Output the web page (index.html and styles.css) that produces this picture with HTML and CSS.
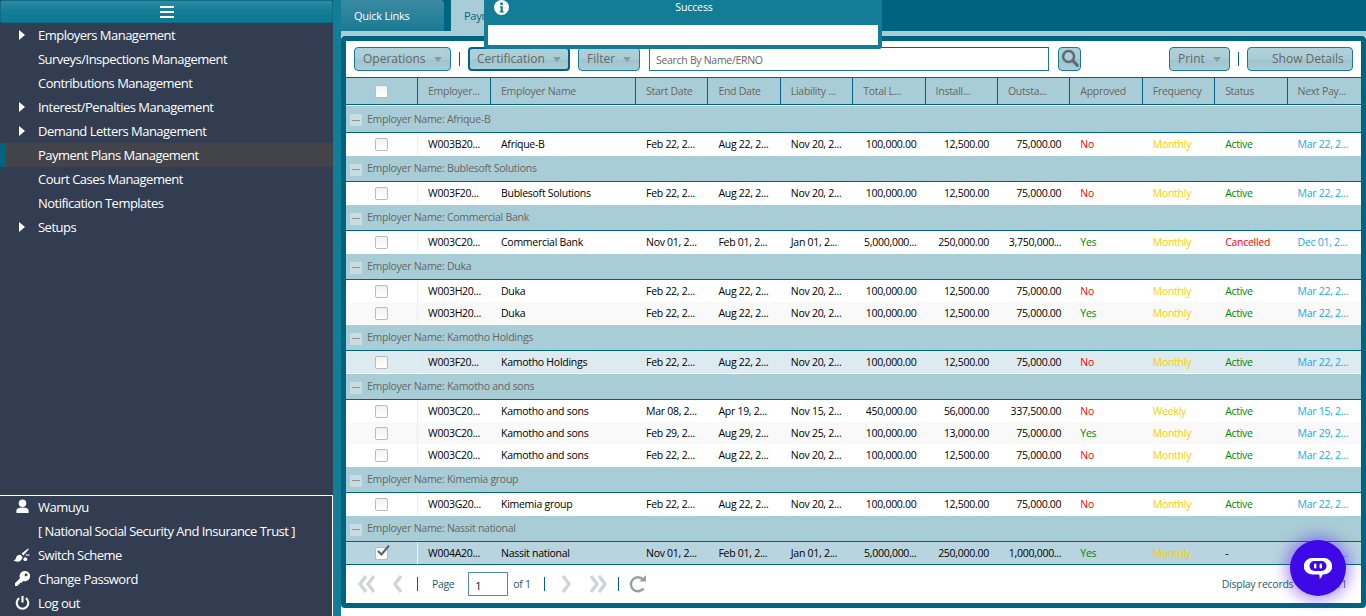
FILE: index.html
```html
<!DOCTYPE html>
<html lang="en">
<head>
    <meta charset="UTF-8">
    <meta name="viewport" content="width=device-width, initial-scale=1.0">
    <title>Payment Plans Management</title>
    <link rel="stylesheet" href="styles.css">
</head>
<body>
    <div class="page">
        <aside class="sidebar">
            <div class="menu-toggle">
                <svg width="16" height="14" viewBox="0 0 16 14"><path d="M1 2h14M1 7h14M1 12h14" stroke="#fff" stroke-width="2.2"/></svg>
            </div>
            <ul class="menu">
                <li class="menu-item has-sub">Employers Management</li>
                <li class="menu-item">Surveys/Inspections Management</li>
                <li class="menu-item">Contributions Management</li>
                <li class="menu-item has-sub">Interest/Penalties Management</li>
                <li class="menu-item has-sub">Demand Letters Management</li>
                <li class="menu-item active">Payment Plans Management</li>
                <li class="menu-item">Court Cases Management</li>
                <li class="menu-item">Notification Templates</li>
                <li class="menu-item has-sub">Setups</li>
            </ul>
            <ul class="menu user-menu">
                <li class="menu-item">
                    <svg class="menu-icon" viewBox="0 0 16 16"><circle cx="8" cy="4.5" r="4"/><path d="M1.5 15v-2.5c0-2.5 2.5-3.5 6.5-3.5s6.500 1 6.500 3.500V15z"/></svg>
                    Wamuyu
                </li>
                <li class="menu-item">[ National Social Security And Insurance Trust ]</li>
                <li class="menu-item">
                    <svg class="menu-icon broom" viewBox="0 0 18 16"><path d="M0 14.500c2-.5 2.500-2 3-4 1-1.500 3-2.500 4.500-2l2 2c.2 2-1.500 4.500-3.500 5-2 .3-4.500.2-6-1z"/><path d="M8.500 7l7-5.500.8 1L10.500 9z"/><circle cx="12.500" cy="13" r="2"/><path d="M13 8h4v1.200h-4z"/></svg>
                    Switch Scheme
                </li>
                <li class="menu-item">
                    <svg class="menu-icon" viewBox="0 0 16 16"><path d="M10.500 0a5.500 5.500 0 1 1-1.700 10.700L7 12.500H5v2H3V16H0v-3l5.300-5.300A5.500 5.500 0 0 1 10.500 0z"/><circle cx="11.800" cy="4.200" r="1.500" fill="#323d51"/></svg>
                    Change Password
                </li>
                <li class="menu-item">
                    <svg class="menu-icon" viewBox="0 0 16 16"><path d="M8 1v7" stroke="#fff" stroke-width="2.200" fill="none"/><path d="M4.500 3.300a6.200 6.200 0 1 0 7 0" stroke="#fff" stroke-width="2.200" fill="none"/></svg>
                    Log out
                </li>
            </ul>
        </aside>

        <main class="content">
            <nav class="tabs">
                <div class="tab">Quick Links</div>
                <div class="tab tab-active">Payment Plans</div>
            </nav>
            <div class="tab-line"></div>
            <section class="panel">
                <div class="toolbar">
                    <button class="btn btn-operations">Operations<span class="caret"></span></button>
                    <span class="sep"></span>
                    <button class="btn btn-cert">Certification<span class="caret"></span></button>
                    <button class="btn btn-filter">Filter<span class="caret"></span></button>
                    <input class="search" type="text" placeholder="Search By Name/ERNO">
                    <button class="btn btn-search">
                        <svg width="18" height="18" viewBox="0 0 19 19"><circle cx="8" cy="8" r="5.800" fill="none" stroke="#5f6b6e" stroke-width="2.600"/><path d="M12.300 12.300l5 5" stroke="#5f6b6e" stroke-width="3.200" stroke-linecap="round"/></svg>
                    </button>
                    <span class="toolbar-gap"></span>
                    <button class="btn btn-print">Print<span class="caret"></span></button>
                    <span class="sep"></span>
                    <button class="btn btn-details">Show Details</button>
                </div>

                <div class="grid-wrap">
                    <table class="grid">
                        <colgroup>
                            <col class="c-check"><col class="c-erno"><col class="c-name"><col class="c-date"><col class="c-date"><col class="c-date"><col class="c-date"><col class="c-date"><col class="c-date"><col class="c-date"><col class="c-date"><col class="c-date"><col class="c-last">
                        </colgroup>
                        <thead>
                            <tr>
                                <th class="center"><span class="check"></span></th>
                                <th>Employer...</th><th>Employer Name</th><th>Start Date</th><th>End Date</th><th>Liability ...</th><th>Total L...</th><th>Install...</th><th>Outsta...</th><th>Approved</th><th>Frequency</th><th>Status</th><th>Next Pay...</th>
                            </tr>
                        </thead>
                        <tbody>
                            <tr class="group"><td colspan="13"><span class="collapse"></span>Employer Name: Afrique-B</td></tr>
                            <tr><td class="center"><span class="check"></span></td><td>W003B20...</td><td>Afrique-B</td><td>Feb 22, 2...</td><td>Aug 22, 2...</td><td>Nov 20, 2...</td><td class="num">100,000.00</td><td class="num">12,500.00</td><td class="num">75,000.00</td><td class="red">No</td><td class="yellow">Monthly</td><td class="green">Active</td><td class="blue">Mar 22, 2...</td></tr>

                            <tr class="group"><td colspan="13"><span class="collapse"></span>Employer Name: Bublesoft Solutions</td></tr>
                            <tr><td class="center"><span class="check"></span></td><td>W003F20...</td><td>Bublesoft Solutions</td><td>Feb 22, 2...</td><td>Aug 22, 2...</td><td>Nov 20, 2...</td><td class="num">100,000.00</td><td class="num">12,500.00</td><td class="num">75,000.00</td><td class="red">No</td><td class="yellow">Monthly</td><td class="green">Active</td><td class="blue">Mar 22, 2...</td></tr>

                            <tr class="group"><td colspan="13"><span class="collapse"></span>Employer Name: Commercial Bank</td></tr>
                            <tr><td class="center"><span class="check"></span></td><td>W003C20...</td><td>Commercial Bank</td><td>Nov 01, 2...</td><td>Feb 01, 2...</td><td>Jan 01, 2...</td><td class="num">5,000,000...</td><td class="num">250,000.00</td><td class="num">3,750,000...</td><td class="green">Yes</td><td class="yellow">Monthly</td><td class="red">Cancelled</td><td class="blue">Dec 01, 2...</td></tr>

                            <tr class="group"><td colspan="13"><span class="collapse"></span>Employer Name: Duka</td></tr>
                            <tr><td class="center"><span class="check"></span></td><td>W003H20...</td><td>Duka</td><td>Feb 22, 2...</td><td>Aug 22, 2...</td><td>Nov 20, 2...</td><td class="num">100,000.00</td><td class="num">12,500.00</td><td class="num">75,000.00</td><td class="red">No</td><td class="yellow">Monthly</td><td class="green">Active</td><td class="blue">Mar 22, 2...</td></tr>
                            <tr class="alt"><td class="center"><span class="check"></span></td><td>W003H20...</td><td>Duka</td><td>Feb 22, 2...</td><td>Aug 22, 2...</td><td>Nov 20, 2...</td><td class="num">100,000.00</td><td class="num">12,500.00</td><td class="num">75,000.00</td><td class="green">Yes</td><td class="yellow">Monthly</td><td class="green">Active</td><td class="blue">Mar 22, 2...</td></tr>

                            <tr class="group"><td colspan="13"><span class="collapse"></span>Employer Name: Kamotho Holdings</td></tr>
                            <tr class="hover"><td class="center"><span class="check"></span></td><td>W003F20...</td><td>Kamotho Holdings</td><td>Feb 22, 2...</td><td>Aug 22, 2...</td><td>Nov 20, 2...</td><td class="num">100,000.00</td><td class="num">12,500.00</td><td class="num">75,000.00</td><td class="red">No</td><td class="yellow">Monthly</td><td class="green">Active</td><td class="blue">Mar 22, 2...</td></tr>

                            <tr class="group"><td colspan="13"><span class="collapse"></span>Employer Name: Kamotho and sons</td></tr>
                            <tr><td class="center"><span class="check"></span></td><td>W003C20...</td><td>Kamotho and sons</td><td>Mar 08, 2...</td><td>Apr 19, 2...</td><td>Nov 15, 2...</td><td class="num">450,000.00</td><td class="num">56,000.00</td><td class="num">337,500.00</td><td class="red">No</td><td class="yellow">Weekly</td><td class="green">Active</td><td class="blue">Mar 15, 2...</td></tr>
                            <tr class="alt"><td class="center"><span class="check"></span></td><td>W003C20...</td><td>Kamotho and sons</td><td>Feb 29, 2...</td><td>Aug 29, 2...</td><td>Nov 25, 2...</td><td class="num">100,000.00</td><td class="num">13,000.00</td><td class="num">75,000.00</td><td class="green">Yes</td><td class="yellow">Monthly</td><td class="green">Active</td><td class="blue">Mar 29, 2...</td></tr>
                            <tr><td class="center"><span class="check"></span></td><td>W003C20...</td><td>Kamotho and sons</td><td>Feb 22, 2...</td><td>Aug 22, 2...</td><td>Nov 20, 2...</td><td class="num">100,000.00</td><td class="num">12,500.00</td><td class="num">75,000.00</td><td class="red">No</td><td class="yellow">Monthly</td><td class="green">Active</td><td class="blue">Mar 22, 2...</td></tr>

                            <tr class="group"><td colspan="13"><span class="collapse"></span>Employer Name: Kimemia group</td></tr>
                            <tr><td class="center"><span class="check"></span></td><td>W003G20...</td><td>Kimemia group</td><td>Feb 22, 2...</td><td>Aug 22, 2...</td><td>Nov 20, 2...</td><td class="num">100,000.00</td><td class="num">12,500.00</td><td class="num">75,000.00</td><td class="red">No</td><td class="yellow">Monthly</td><td class="green">Active</td><td class="blue">Mar 22, 2...</td></tr>

                            <tr class="group"><td colspan="13"><span class="collapse"></span>Employer Name: Nassit national</td></tr>
                            <tr class="selected"><td class="center"><span class="check checked"><svg width="16" height="14" viewBox="0 0 16 14"><path d="M3 7l3.500 3.500L14 1.500" fill="none" stroke="#5c6468" stroke-width="2"/></svg></span></td><td>W004A20...</td><td>Nassit national</td><td>Nov 01, 2...</td><td>Feb 01, 2...</td><td>Jan 01, 2...</td><td class="num">5,000,000...</td><td class="num">250,000.00</td><td class="num">1,000,000...</td><td class="green">Yes</td><td class="yellow">Monthly</td><td>-</td><td class="blue">Mar 22, 2...</td></tr>
                        </tbody>
                    </table>
                </div>

                <div class="pager">
                    <svg width="19" height="18" viewBox="0 0 19 18"><path d="M8 1L2 9l6 8M16 1l-6 8 6 8" fill="none" stroke="#d2d4d5" stroke-width="3.400"/></svg>
                    <svg class="prev" width="11" height="18" viewBox="0 0 11 18"><path d="M9 1L3 9l6 8" fill="none" stroke="#d2d4d5" stroke-width="3.400"/></svg>
                    <span class="sep"></span>
                    <span class="pager-page">Page</span>
                    <input class="page-input" type="text" value="1">
                    <span class="pager-of">of 1</span>
                    <span class="sep"></span>
                    <svg class="next" width="11" height="18" viewBox="0 0 11 18"><path d="M2 1l6 8-6 8" fill="none" stroke="#d2d4d5" stroke-width="3.400"/></svg>
                    <svg class="last" width="19" height="18" viewBox="0 0 19 18"><path d="M3 1l6 8-6 8M11 1l6 8-6 8" fill="none" stroke="#d2d4d5" stroke-width="3.400"/></svg>
                    <span class="sep"></span>
                    <svg class="refresh" width="18" height="18" viewBox="0 0 18 18"><path d="M14.500 13.500a7 7 0 1 1-.5-9" fill="none" stroke="#9a9d9e" stroke-width="2.400"/><path d="M10.500 6.500H17V0z" fill="#9a9d9e"/></svg>
                    <span class="pager-info">Display records 1 - 11 of 11</span>
                </div>
            </section>
        </main>
    </div>

    <div class="notice">
        <div class="notice-head">
            <svg class="notice-icon" width="15" height="15" viewBox="0 0 15 15"><circle cx="7.500" cy="7.500" r="7.500" fill="#fff"/><circle cx="7.500" cy="3.800" r="1.500" fill="#137c96"/><path d="M5.800 6.200h3v5h1v1.300h-4.200v-1.300h1v-3.700h-.8z" fill="#137c96"/></svg>
            <span>Success</span>
        </div>
        <div class="notice-body"></div>
    </div>

    <div class="chat-button">
        <svg width="28" height="21" viewBox="0 0 28 21"><path d="M8 0h12a8 8 0 0 1 0 16.500h-1.500c-.5 2-1.500 3.500-3 4.500.3-1.500.2-3-.3-4.500H8A8 8 0 0 1 8 0z" fill="#fff"/><rect x="5.500" y="3" width="17" height="10" rx="5" fill="#3f08e6"/><rect x="10" y="5.500" width="2.400" height="5" rx="1.200" fill="#fff"/><rect x="15.600" y="5.500" width="2.400" height="5" rx="1.200" fill="#fff"/></svg>
    </div>
</body>
</html>
```

FILE: styles.css
```css
* {
    box-sizing: border-box;
}

html, body {
    height: 100%;
}

body {
    margin: 0;
    font-family: "Open Sans", "Noto Sans", sans-serif;
    font-size: 12px;
    overflow: hidden;
    background-color: #fff;
}

.page {
    display: flex;
    height: 616px;
}

/* left menu */
.sidebar {
    width: 333px;
    flex-shrink: 0;
    display: flex;
    flex-direction: column;
    background-color: #323d51;
    color: #fff;
}

.menu-toggle {
    height: 23px;
    display: flex;
    justify-content: center;
    align-items: center;
    background: linear-gradient(#2f8aa3, #137c96 50%, #0f7a94);
    border: 1px solid #0d6d86;
    border-radius: 2px;
}

.menu {
    list-style: none;
    margin: 0;
    padding: 0;
}

.menu-item {
    position: relative;
    height: 24px;
    line-height: 24px;
    padding-left: 38px;
    font-size: 13px;
    letter-spacing: -0.52px;
    white-space: nowrap;
}

.menu-item.has-sub::before {
    content: "";
    position: absolute;
    left: 19px;
    top: 7px;
    border-left: 6px solid #fff;
    border-top: 5px solid transparent;
    border-bottom: 5px solid transparent;
}

.menu-item.active {
    background-color: #434449;
    border-left: 6px solid #00637f;
    padding-left: 32px;
}

.user-menu {
    margin-top: auto;
    border-top: 1px solid #fff;
    border-right: 1px solid #fff;
    padding-bottom: 1px;
}

.user-menu .menu-item:first-child {
    height: 23px;
    line-height: 22px;
}

.user-menu .menu-item:first-child .menu-icon {
    top: 3px;
}

.menu-icon {
    position: absolute;
    left: 15px;
    top: 4px;
    width: 15px;
    height: 15px;
    fill: #fff;
}

.menu-icon.broom {
    left: 13px;
    width: 18px;
}

/* right side */
.content {
    flex: 1;
    min-width: 0;
    display: flex;
    flex-direction: column;
    padding-bottom: 8px;
    border-left: 8px solid #137c96;
}

.tabs {
    display: flex;
    height: 31px;
    gap: 7px;
    flex-shrink: 0;
    background-color: #00637f;
}

.tab {
    width: 103px;
    line-height: 32px;
    padding-left: 13px;
    font-size: 11px;
    letter-spacing: -0.25px;
    color: #fff;
    background: linear-gradient(#3a8ba2, #1b7a93);
    border-top-right-radius: 4px;
}

.tab-active {
    width: 200px;
    color: #00637f;
    background: #a9cdd6;
}

.tab-line {
    height: 5px;
    flex-shrink: 0;
    background-color: #a9cdd6;
}

.panel {
    flex: 1;
    min-height: 0;
    display: flex;
    flex-direction: column;
    background-color: #fff;
    border: 5px solid #00637f;
    border-radius: 4px;
}

.toolbar {
    display: flex;
    align-items: center;
    height: 36px;
    padding: 0 8px;
    flex-shrink: 0;
}

.btn {
    height: 24px;
    padding: 0 0 1px 8px;
    font-family: inherit;
    font-size: 12px;
    color: #666;
    text-align: left;
    background: linear-gradient(#b0d1d9, #a9cdd6 50%, #9fc4cd 55%, #a9cdd6);
    border: 1px solid #1b7a93;
    border-radius: 4px;
}

.caret {
    display: inline-block;
    margin-left: 8px;
    vertical-align: middle;
    border-top: 5px solid #8b9a9e;
    border-left: 4px solid transparent;
    border-right: 4px solid transparent;
}

.sep {
    width: 1px;
    height: 14px;
    background-color: #00637f;
    flex-shrink: 0;
}

.btn-operations {
    width: 97px;
    margin-right: 8px;
}

.btn-cert {
    width: 102px;
    margin-left: 8px;
    padding-left: 7px;
    border-color: #00637f;
    border-width: 2px;
}

.btn-filter {
    width: 62px;
    margin-left: 8px;
}

.search {
    width: 400px;
    height: 24px;
    margin-left: 9px;
    padding: 1px 6px 0;
    font-family: inherit;
    font-size: 10.5px;
    letter-spacing: -0.3px;
    border: 1px solid #1b7a93;
    border-top-color: #00637f;
    outline: none;
}

.search::placeholder {
    color: #666;
}

.btn-search {
    width: 23px;
    margin-left: 9px;
    padding: 1px 0 0 2px;
}

.toolbar-gap {
    flex: 1;
}

.btn-print {
    width: 61px;
    margin-right: 8px;
}

.btn-details {
    width: 106px;
    margin-left: 8px;
    padding-left: 24px;
}

/* grid */
.grid-wrap {
    flex: 1;
    min-height: 0;
    overflow: hidden;
}

.grid {
    width: 1015px;
    table-layout: fixed;
    border-collapse: separate;
    border-spacing: 0;
    font-size: 10.5px;
    letter-spacing: -0.27px;
}

.c-check { width: 72px; }
.c-erno { width: 73px; }
.c-name { width: 145px; }
.c-date { width: 72.4px; }
.c-last { width: 73.4px; }

.grid th {
    height: 28px;
    padding: 0 0 0 10px;
    text-align: left;
    font-weight: normal;
    color: #666;
    background-color: #a9cdd6;
    border-top: 1px solid #00637f;
    border-right: 1px solid #00637f;
    border-bottom: 1px solid #00637f;
    white-space: nowrap;
    overflow: hidden;
}

.grid th:last-child {
    border-right: none;
}

.grid td {
    height: 22px;
    padding: 0 0 0 10px;
    color: #000;
    white-space: nowrap;
    overflow: hidden;
}

.grid td:first-child {
    border-right: 1px solid #eee;
}

.grid .center {
    padding: 0;
    text-align: center;
}

.grid .num {
    padding: 0 9px 0 0;
    text-align: right;
}

.grid tr.group td {
    height: 27px;
    padding: 0 0 0 4px;
    color: #666;
    background-color: #a9cdd6;
    border-right: none;
    border-top: 1px solid #fff;
    border-bottom: 1px solid #00637f;
}

.grid tbody tr:first-child td {
    height: 28px;
}

.grid tr.alt td {
    background-color: #f9f9f9;
}

.grid tr.hover td {
    background-color: #ddeaef;
}

.grid tr.selected td {
    height: 23px;
    background-color: #b8d4de;
    border-bottom: 1px solid #00637f;
}

.grid td.red { color: #f00; }
.grid td.green { color: #080; }
.grid td.yellow { color: #fc0; }
.grid td.blue { color: #14aaf5; }

.check {
    display: inline-block;
    width: 13px;
    height: 13px;
    vertical-align: middle;
    background: linear-gradient(#f2f2f2, #fff);
    border: 1px solid #bbb;
    border-radius: 2px;
}

.check.checked {
    position: relative;
}

.check.checked svg {
    position: absolute;
    left: -1px;
    top: -4px;
}

.collapse {
    display: inline-block;
    width: 12px;
    height: 12px;
    margin-right: 5px;
    vertical-align: middle;
    background: linear-gradient(#8f9293, #8f9293) center / 8px 1px no-repeat #c8dce2;
}

/* pager */
.pager {
    display: flex;
    align-items: center;
    height: 38px;
    padding: 0 14px 0 12px;
    flex-shrink: 0;
    font-size: 10.5px;
    letter-spacing: -0.35px;
    color: #1e5a6e;
}

.prev {
    margin: 0 14px 0 15px;
}

.pager-page {
    margin: 0 14px;
}

.page-input {
    width: 40px;
    height: 24px;
    padding: 2px 6px 0;
    font-family: inherit;
    font-size: 11px;
    color: #111;
    border: 1px solid #4f8ea1;
    outline: none;
}

.pager-of {
    margin: 0 13px 0 5px;
}

.next {
    margin-left: 16px;
}

.last {
    margin: 0 11px 0 16px;
}

.refresh {
    margin-left: 10px;
}

.pager-info {
    margin-left: auto;
    letter-spacing: -0.25px;
}

/* overlays */
.notice {
    position: absolute;
    left: 484px;
    top: 0;
    width: 398px;
    height: 49px;
    padding: 0 4px;
    background-color: #137c96;
    border-radius: 0 0 3px 3px;
    color: #fff;
}

.notice-head {
    position: relative;
    height: 25px;
    padding-left: 22px;
    line-height: 14px;
    text-align: center;
    font-size: 10.5px;
    letter-spacing: -0.1px;
}

.notice-icon {
    position: absolute;
    left: 6px;
    top: 0;
}

.notice-body {
    height: 20px;
    background-color: #fff;
}

.chat-button {
    position: absolute;
    left: 1290px;
    top: 540px;
    width: 56px;
    height: 56px;
    display: flex;
    justify-content: center;
    align-items: center;
    background-color: #3f08e6;
    border-radius: 50%;
    box-shadow: 0 0 14px 5px rgba(90, 40, 240, 0.45);
}
```
